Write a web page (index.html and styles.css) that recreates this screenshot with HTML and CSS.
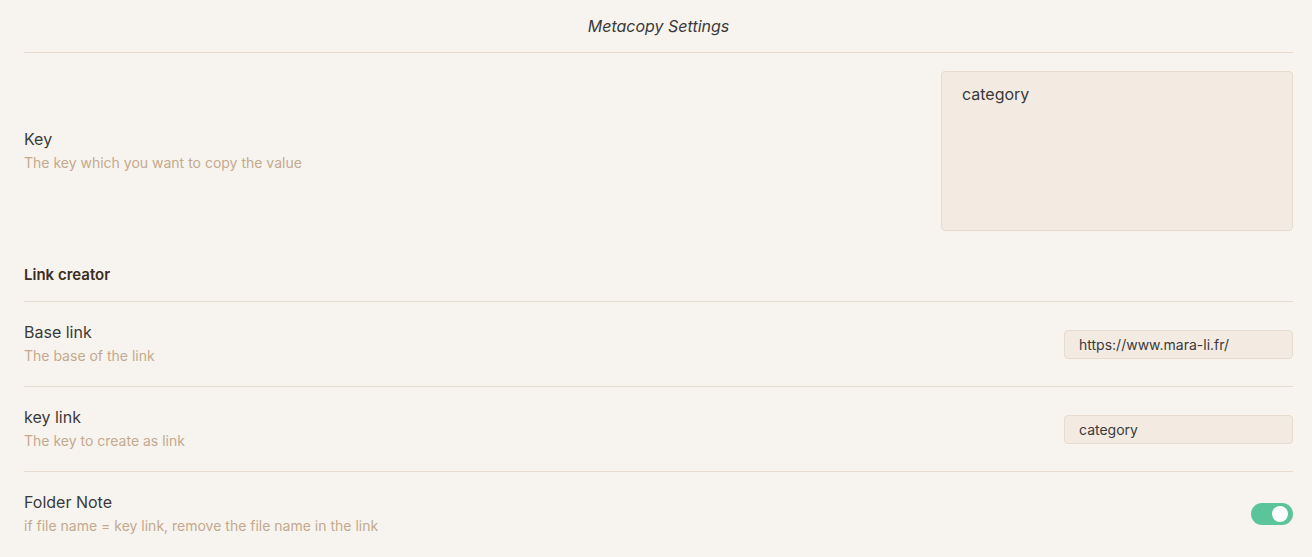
FILE: index.html
```html
<!DOCTYPE html>
<html>
<head>
<meta charset="utf-8">
<link rel="stylesheet" href="styles.css">
</head>
<body>
<div class="page">
  <div class="title">Metacopy Settings</div>
  <div class="item first">
    <div class="info">
      <div class="name">Key</div>
      <div class="desc">The key which you want to copy the value</div>
    </div>
    <div class="control"><div class="textarea">category</div></div>
  </div>
  <div class="heading">Link creator</div>
  <div class="item">
    <div class="info">
      <div class="name">Base link</div>
      <div class="desc">The base of the link</div>
    </div>
    <div class="control"><div class="input">https://www.mara-li.fr/</div></div>
  </div>
  <div class="item">
    <div class="info">
      <div class="name">key link</div>
      <div class="desc">The key to create as link</div>
    </div>
    <div class="control"><div class="input">category</div></div>
  </div>
  <div class="item">
    <div class="info">
      <div class="name">Folder Note</div>
      <div class="desc">if file name = key link, remove the file name in the link</div>
    </div>
    <div class="control"><div class="toggle"><span class="knob"></span></div></div>
  </div>
</div>
</body>
</html>
```
FILE: styles.css
```css
html, body {
  margin: 0;
  background: #f7f4ef;
}
body {
  font-family: Inter, "Noto Sans", sans-serif;
  color: #3a3a3a;
}
.page {
  padding: 0 19px 0 24px;
}
.title {
  text-align: center;
  font-style: italic;
  font-size: 16px;
  line-height: 24px;
  padding: 14px 0 14px;
  border-bottom: 1px solid #e8dccd;
  color: #3a3a3a;
}
.item {
  display: flex;
  align-items: center;
  padding: 18px 0;
  border-top: 1px solid #e8dccd;
}
.item.first {
  border-top: none;
}
.info {
  flex: 1;
}
.name {
  font-size: 16px;
  line-height: 24px;
  color: #3a3a3a;
}
.desc {
  font-size: 14px;
  line-height: 24px;
  color: #c4a98d;
}
.control {
  display: flex;
  align-items: center;
}
.textarea {
  box-sizing: border-box;
  width: 352px;
  height: 160px;
  padding: 10px 20px;
  font-size: 16px;
  line-height: 24px;
  background: #f3ebe2;
  border: 1px solid #e6dbcd;
  border-radius: 4px;
  color: #3a3a3a;
}
.input {
  box-sizing: border-box;
  width: 229px;
  height: 29px;
  padding: 0 14px;
  font-size: 14px;
  line-height: 27px;
  background: #f3ebe2;
  border: 1px solid #e6dbcd;
  border-radius: 4px;
  color: #3a3a3a;
}
.heading {
  font-size: 15px;
  font-weight: 600;
  line-height: 22px;
  padding: 15px 0 15px;
  color: #3d2c20;
}
.toggle {
  position: relative;
  width: 42px;
  height: 22px;
  border-radius: 11px;
  background: #5cc499;
}
.knob {
  position: absolute;
  top: 3px;
  right: 5px;
  width: 16px;
  height: 16px;
  border-radius: 50%;
  background: #ffffff;
}
```
